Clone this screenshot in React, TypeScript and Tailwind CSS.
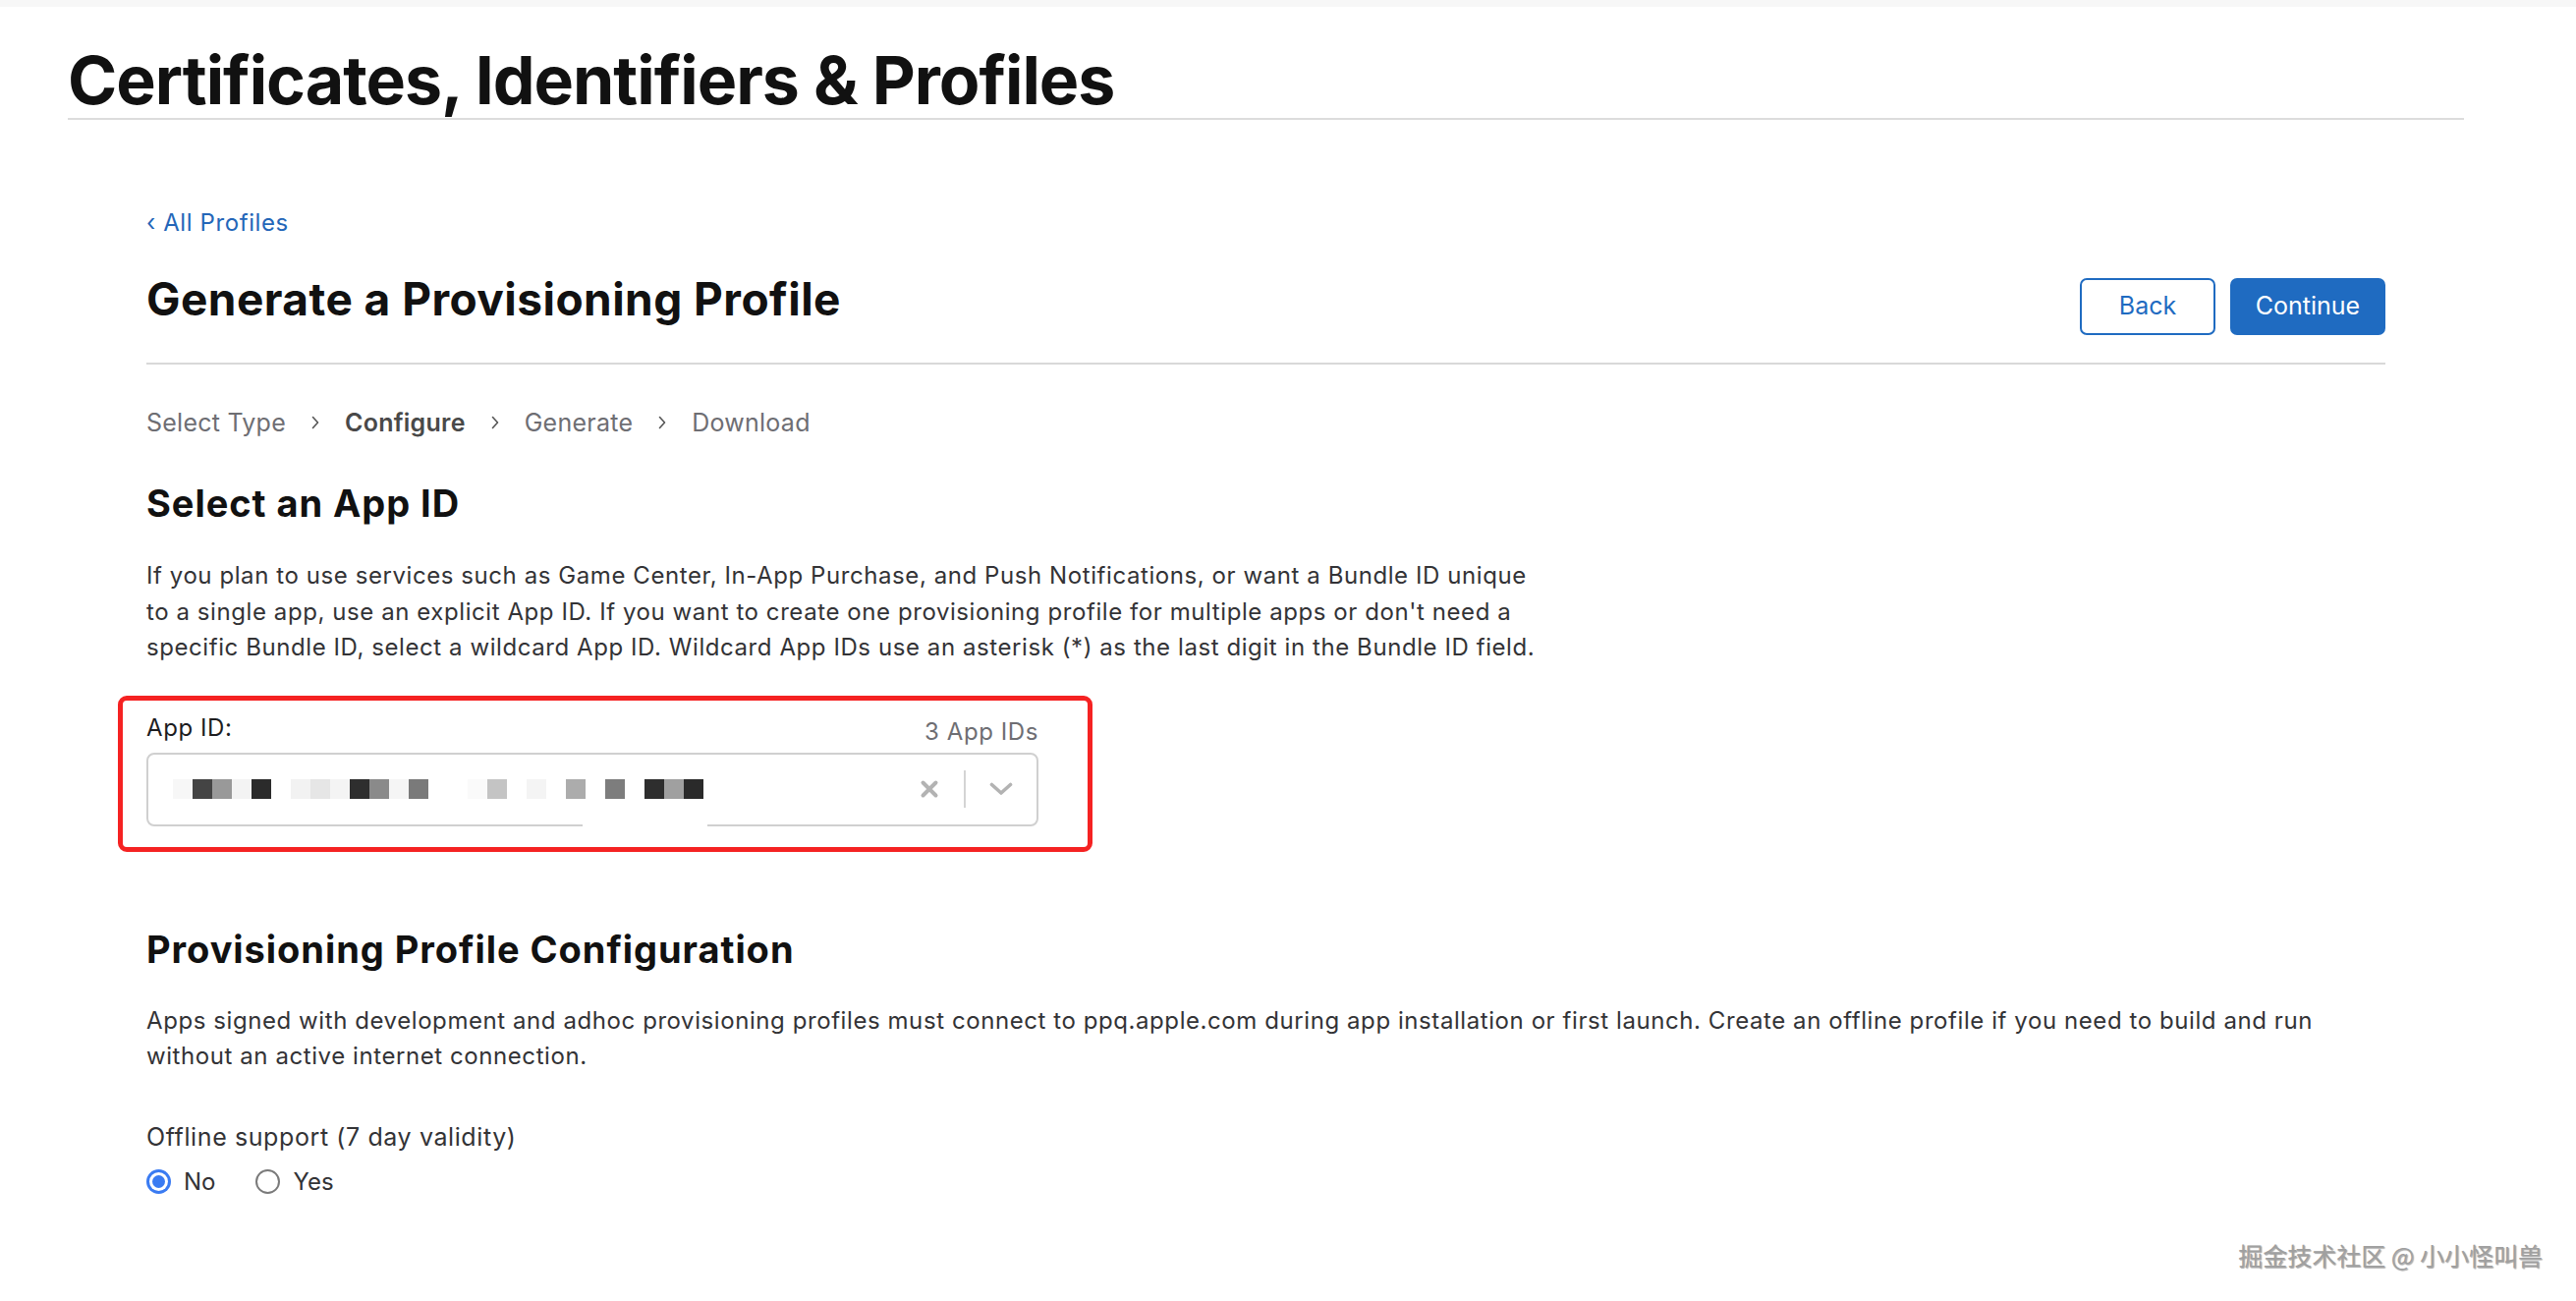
import React from "react";

const mosaic = [
  "bg-[#f7f7f7]",
  "bg-[#444444]",
  "bg-[#999999]",
  "bg-[#f3f3f3]",
  "bg-[#2b2b2b]",
  "bg-[#ffffff]",
  "bg-[#f2f2f2]",
  "bg-[#e6e6e6]",
  "bg-[#f4f4f4]",
  "bg-[#2e2e2e]",
  "bg-[#8a8a8a]",
  "bg-[#f5f5f5]",
  "bg-[#7a7a7a]",
  "bg-[#ffffff]",
  "bg-[#ffffff]",
  "bg-[#fafafa]",
  "bg-[#c4c4c4]",
  "bg-[#ffffff]",
  "bg-[#f4f4f4]",
  "bg-[#ffffff]",
  "bg-[#acacac]",
  "bg-[#ffffff]",
  "bg-[#7d7d7d]",
  "bg-[#ffffff]",
  "bg-[#2e2e2e]",
  "bg-[#a0a0a0]",
  "bg-[#2a2a2a]",
];

function Chevron() {
  return (
    <svg width="10" height="16" viewBox="0 0 10 16" className="mx-[25px] shrink-0">
      <path d="M2.5 2.5 L7.5 8 L2.5 13.5" fill="none" stroke="#555" strokeWidth="1.6" strokeLinecap="round" strokeLinejoin="round" />
    </svg>
  );
}

export default function App() {
  return (
    <div className="relative min-h-[1324px] bg-white font-['Inter','Liberation_Sans',sans-serif] text-[#333336]">
      <div className="h-[7px] bg-[#f7f7f7]" />

      <header className="ml-[69px] w-[2439px] border-b-2 border-[#dcdcdc] pb-[5px] pt-[40px]">
        <h1 className="text-[68px] font-bold leading-[68px] tracking-[-0.015em] text-[#111111]">
          Certificates, Identifiers &amp; Profiles
        </h1>
      </header>

      <main className="ml-[149px] w-[2279px]">
        <a className="mt-[90px] block text-[24px] leading-[30px] tracking-[0.025em] text-[#2466b8]">‹ All Profiles</a>

        <div className="mt-[35px] flex items-start justify-between border-b-2 border-[#d9d9d9] pb-[28px]">
          <h2 className="text-[46px] font-bold leading-[54px] tracking-[0.01em] text-[#111111]">
            Generate a Provisioning Profile
          </h2>
          <div className="mt-[6px] flex gap-[15px]">
            <button className="flex h-[58px] w-[138px] items-center justify-center rounded-[7px] border-2 border-[#1f6bc1] bg-white text-[25px] text-[#1f6bc1]">
              Back
            </button>
            <button className="flex h-[58px] w-[158px] items-center justify-center rounded-[7px] bg-[#1f6bc1] text-[25px] text-white">
              Continue
            </button>
          </div>
        </div>

        <nav className="mt-[44px] flex items-center text-[25px] leading-[30px] tracking-[0.01em] text-[#6e6e73]">
          <span>Select Type</span>
          <Chevron />
          <span className="font-semibold text-[#494949]">Configure</span>
          <Chevron />
          <span>Generate</span>
          <Chevron />
          <span>Download</span>
        </nav>

        <h3 className="mt-[45px] text-[38px] font-bold leading-[44px] tracking-[0.025em] text-[#111111]">
          Select an App ID
        </h3>

        <p className="mt-[34px] text-[24px] leading-[36.5px] tracking-[0.024em]">
          <span className="block">
            If you plan to use services such as Game Center, In-App Purchase, and Push Notifications, or want a Bundle ID unique
          </span>
          <span className="block">
            to a single app, use an explicit App ID. If you want to create one provisioning profile for multiple apps or don't need a
          </span>
          <span className="block">
            specific Bundle ID, select a wildcard App ID. Wildcard App IDs use an asterisk (*) as the last digit in the Bundle ID field.
          </span>
        </p>

        <div className="-ml-[29px] mt-[30px] h-[159px] w-[992px] rounded-[9px] border-[5px] border-[#f52222] pl-[24px] pr-[50px] pt-[13px]">
          <div className="flex items-start justify-between text-[24px] leading-[30px] tracking-[0.024em]">
            <span className="text-[#1d1d1f]">App ID:</span>
            <span className="pt-[4px] text-[#6e6e73]">3 App IDs</span>
          </div>
          <div className="relative mt-[6px] flex h-[75px] w-[908px] items-center rounded-[8px] border-2 border-[#d0d0d0] bg-white pl-[25px] pr-[23px]">
            <div className="flex items-center">
              {mosaic.map((c, i) => (
                <div key={i} className={`h-[20px] w-[20px] ${c}`} />
              ))}
            </div>
            <div className="absolute bottom-[-2px] left-[442px] h-[3px] w-[127px] bg-white" />
            <div className="ml-auto flex items-center">
              <svg width="20" height="20" viewBox="0 0 20 20">
                <path d="M3.5 3.5 L16.5 16.5 M16.5 3.5 L3.5 16.5" stroke="#b3b3b3" strokeWidth="4" strokeLinecap="round" />
              </svg>
              <div className="ml-[25px] mr-[23px] h-[38px] w-[2px] bg-[#d4d4d4]" />
              <svg width="26" height="16" viewBox="0 0 26 16">
                <path d="M3.5 3.5 L13 12 L22.5 3.5" fill="none" stroke="#b3b3b3" strokeWidth="3.6" strokeLinecap="round" strokeLinejoin="round" />
              </svg>
            </div>
          </div>
        </div>

        <h3 className="mt-[77px] text-[38px] font-bold leading-[44px] tracking-[0.025em] text-[#111111]">
          Provisioning Profile Configuration
        </h3>

        <p className="mt-[33px] text-[24px] leading-[36.5px] tracking-[0.024em]">
          <span className="block">
            Apps signed with development and adhoc provisioning profiles must connect to ppq.apple.com during app installation or first launch. Create an offline profile if you need to build and run
          </span>
          <span className="block">without an active internet connection.</span>
        </p>

        <div className="mt-[48px] text-[25px] leading-[30px] tracking-[0.024em] text-[#333336]">Offline support (7 day validity)</div>

        <div className="mt-[16px] flex items-center text-[24px] leading-[30px] text-[#333336]">
          <span className="flex h-[25px] w-[25px] items-center justify-center rounded-full bg-[#3a7bf2]">
            <span className="flex h-[19px] w-[19px] items-center justify-center rounded-full bg-white">
              <span className="h-[13px] w-[13px] rounded-full bg-[#3a7bf2]" />
            </span>
          </span>
          <span className="ml-[13px]">No</span>
          <span className="ml-[41px] h-[25px] w-[25px] rounded-full border-2 border-[#7a7a7a] bg-white" />
          <span className="ml-[13px]">Yes</span>
        </div>
      </main>

      <div className="absolute bottom-[33px] right-[34px] font-['Noto_Sans_CJK_SC',sans-serif] text-[25px] leading-[28px] text-[#a0a0a0] [text-shadow:1px_1px_1px_rgba(0,0,0,0.35)]">
        掘金技术社区 @ 小小怪叫兽
      </div>
    </div>
  );
}
